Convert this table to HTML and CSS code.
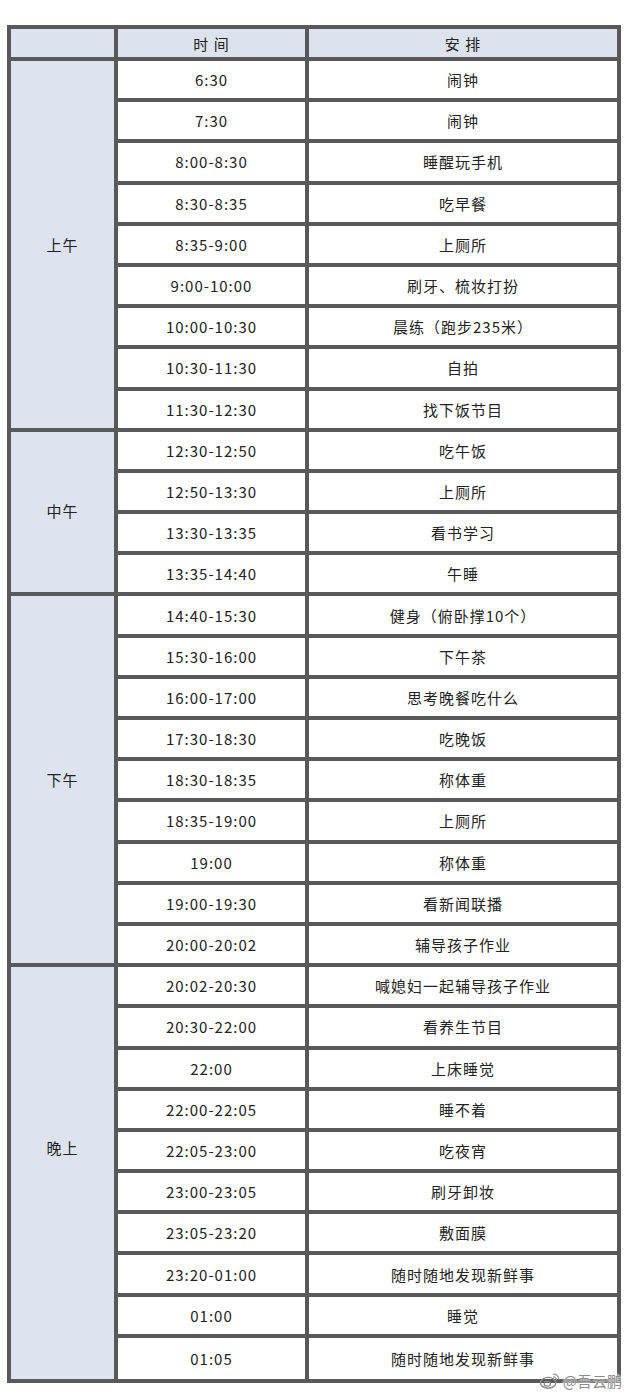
FILE: index.html
```html
<!DOCTYPE html>
<html lang="zh">
<head>
<meta charset="utf-8">
<title>作息表</title>
<link rel="stylesheet" href="styles.css">
</head>
<body>
<div class="page">
  <div class="sheet">
    <div class="head blank"></div>
    <div class="head">时 间</div>
    <div class="head">安 排</div>

    <div class="period p1">上午</div>
    <div class="cell">6:30</div><div class="cell">闹钟</div>
    <div class="cell">7:30</div><div class="cell">闹钟</div>
    <div class="cell">8:00-8:30</div><div class="cell">睡醒玩手机</div>
    <div class="cell">8:30-8:35</div><div class="cell">吃早餐</div>
    <div class="cell">8:35-9:00</div><div class="cell">上厕所</div>
    <div class="cell">9:00-10:00</div><div class="cell">刷牙、梳妆打扮</div>
    <div class="cell">10:00-10:30</div><div class="cell">晨练（跑步235米）</div>
    <div class="cell">10:30-11:30</div><div class="cell">自拍</div>
    <div class="cell">11:30-12:30</div><div class="cell">找下饭节目</div>

    <div class="period p2">中午</div>
    <div class="cell">12:30-12:50</div><div class="cell">吃午饭</div>
    <div class="cell">12:50-13:30</div><div class="cell">上厕所</div>
    <div class="cell">13:30-13:35</div><div class="cell">看书学习</div>
    <div class="cell">13:35-14:40</div><div class="cell">午睡</div>

    <div class="period p3">下午</div>
    <div class="cell">14:40-15:30</div><div class="cell">健身（俯卧撑10个）</div>
    <div class="cell">15:30-16:00</div><div class="cell">下午茶</div>
    <div class="cell">16:00-17:00</div><div class="cell">思考晚餐吃什么</div>
    <div class="cell">17:30-18:30</div><div class="cell">吃晚饭</div>
    <div class="cell">18:30-18:35</div><div class="cell">称体重</div>
    <div class="cell">18:35-19:00</div><div class="cell">上厕所</div>
    <div class="cell">19:00</div><div class="cell">称体重</div>
    <div class="cell">19:00-19:30</div><div class="cell">看新闻联播</div>
    <div class="cell">20:00-20:02</div><div class="cell">辅导孩子作业</div>

    <div class="period p4">晚上</div>
    <div class="cell">20:02-20:30</div><div class="cell">喊媳妇一起辅导孩子作业</div>
    <div class="cell">20:30-22:00</div><div class="cell">看养生节目</div>
    <div class="cell">22:00</div><div class="cell">上床睡觉</div>
    <div class="cell">22:00-22:05</div><div class="cell">睡不着</div>
    <div class="cell">22:05-23:00</div><div class="cell">吃夜宵</div>
    <div class="cell">23:00-23:05</div><div class="cell">刷牙卸妆</div>
    <div class="cell">23:05-23:20</div><div class="cell">敷面膜</div>
    <div class="cell">23:20-01:00</div><div class="cell">随时随地发现新鲜事</div>
    <div class="cell">01:00</div><div class="cell">睡觉</div>
    <div class="cell">01:05</div><div class="cell">随时随地发现新鲜事</div>
  </div>
  <div class="mark">
    <svg class="mark-logo" viewBox="0 0 24 20" width="22" height="18" aria-hidden="true">
      <ellipse cx="10" cy="12" rx="8.5" ry="6" fill="none" stroke="#8a8a8a" stroke-width="1.6"/>
      <ellipse cx="9" cy="13" rx="3.5" ry="2.6" fill="none" stroke="#8a8a8a" stroke-width="1.4"/>
      <path d="M15 2.5a6 6 0 0 1 7 6" fill="none" stroke="#9a9a9a" stroke-width="1.4"/>
      <path d="M15.5 5.5a3 3 0 0 1 3.5 3" fill="none" stroke="#9a9a9a" stroke-width="1.2"/>
    </svg>
    <span class="mark-text">@吾云鹏</span>
  </div>
</div>
</body>
</html>
```

FILE: styles.css
```css
html, body {
  margin: 0;
  padding: 0;
  background: #ffffff;
}

.page {
  position: relative;
  width: 630px;
  height: 1393px;
  padding: 25px 0 0 7px;
  box-sizing: border-box;
}

.sheet {
  display: grid;
  width: 614px;
  box-sizing: border-box;
  padding: 4px;
  gap: 4px;
  background: #595959;
  grid-template-columns: 103px 187px 308px;
  grid-template-rows: 28px repeat(31, 37.2px) 41px;
  font-family: "Noto Sans CJK SC", "Noto Sans", sans-serif;
  font-size: 15px;
  letter-spacing: 1px;
  color: #222;
}

.head {
  background: #dce3ef;
  display: flex;
  align-items: center;
  justify-content: center;
}

.cell {
  background: #ffffff;
  display: flex;
  align-items: center;
  justify-content: center;
}

.period {
  grid-column: 1;
  background: #dde4f0;
  display: flex;
  align-items: center;
  justify-content: center;
  box-sizing: border-box;
}

.p1 { grid-row: 2 / span 9; }
.p2 { grid-row: 11 / span 4; padding-bottom: 4px; }
.p3 { grid-row: 15 / span 9; }
.p4 { grid-row: 24 / span 10; padding-bottom: 50px; }

.mark {
  position: absolute;
  right: 8px;
  bottom: 2px;
  display: flex;
  align-items: center;
  gap: 2px;
  font-family: "Noto Sans CJK SC", sans-serif;
  font-size: 15px;
  color: #8c8c8c;
  text-shadow: 0 0 2px #fff, 0 0 2px #fff;
}

.mark-logo {
  display: block;
}
```
